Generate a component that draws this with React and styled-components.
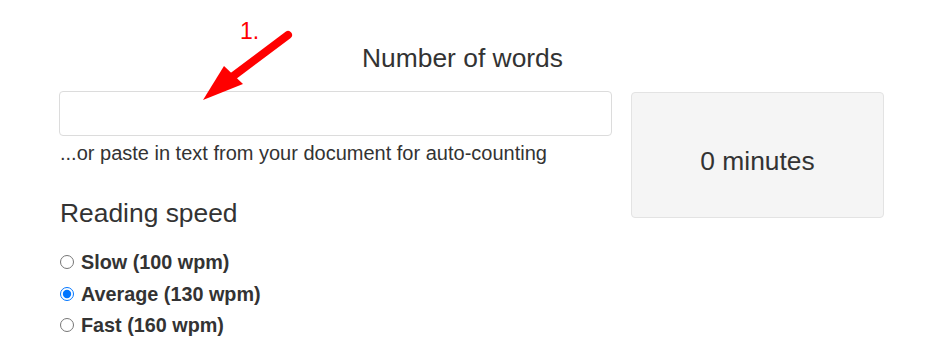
import React from "react";
import styled, { createGlobalStyle } from "styled-components";

const Global = createGlobalStyle`
  html, body { margin: 0; padding: 0; background: #fff; }
  body { font-family: "Liberation Sans", Arial, sans-serif; color: #333; }
`;

const Page = styled.div`
  position: relative;
  width: 938px;
  height: 360px;
  padding: 40px 54px 0 59px;
  box-sizing: border-box;
`;

const Title = styled.h3`
  margin: 0 18px 15px 0;
  font-size: 26.4px;
  font-weight: 400;
  line-height: 36px;
  text-align: center;
`;

const Row = styled.div`
  display: grid;
  grid-template-columns: 553px 253px;
  column-gap: 19px;
  align-items: start;
`;

const Col = styled.div`
  display: flex;
  flex-direction: column;
`;

const TextInput = styled.input`
  box-sizing: border-box;
  width: 100%;
  height: 45px;
  border: 1px solid #dcdcdc;
  border-radius: 4px;
  padding: 6px 12px;
  font: inherit;
  font-size: 19.8px;
  outline: none;
`;

const Help = styled.p`
  margin: 5px 0 0 1px;
  font-size: 20px;
  line-height: 24px;
  color: #333;
`;

const SubTitle = styled.h3`
  margin: 30px 0 18px 1px;
  font-size: 26.4px;
  font-weight: 400;
  line-height: 36px;
`;

const Options = styled.div`
  display: flex;
  flex-direction: column;
  gap: 5.5px;
`;

const Option = styled.label`
  display: flex;
  align-items: center;
  gap: 7px;
  font-size: 19.8px;
  font-weight: 700;
  line-height: 26px;
  cursor: pointer;
`;

const Radio = styled.input`
  margin: 0 0 0 1px;
  width: 14px;
  height: 14px;
  accent-color: #0075ff;
`;

const Result = styled.div`
  box-sizing: border-box;
  margin-top: 1px;
  height: 126px;
  background: #f5f5f5;
  border: 1px solid #e3e3e3;
  border-radius: 4px;
  display: flex;
  align-items: center;
  justify-content: center;
  padding-top: 13px;
  font-size: 26.4px;
`;

const Annotation = styled.svg`
  position: absolute;
  left: 0;
  top: 0;
  pointer-events: none;
`;

const AnnotationLabel = styled.span`
  position: absolute;
  left: 240px;
  top: 19px;
  font-size: 23px;
  line-height: 24px;
  color: #ff0000;
`;

export default function App() {
  const [speed, setSpeed] = React.useState("130");
  const speeds = [
    { v: "100", l: "Slow (100 wpm)" },
    { v: "130", l: "Average (130 wpm)" },
    { v: "160", l: "Fast (160 wpm)" },
  ];
  return (
    <>
      <Global />
      <Page>
        <Title>Number of words</Title>
        <Row>
          <Col>
            <TextInput type="text" />
            <Help>...or paste in text from your document for auto-counting</Help>
            <SubTitle>Reading speed</SubTitle>
            <Options>
              {speeds.map((s) => (
                <Option key={s.v}>
                  <Radio
                    type="radio"
                    name="speed"
                    checked={speed === s.v}
                    onChange={() => setSpeed(s.v)}
                  />
                  {s.l}
                </Option>
              ))}
            </Options>
          </Col>
          <Result>0 minutes</Result>
        </Row>
        <AnnotationLabel>1.</AnnotationLabel>
        <Annotation width="938" height="360" viewBox="0 0 938 360">
          <line x1="288" y1="35" x2="232" y2="77" stroke="#ff0000" strokeWidth="8" strokeLinecap="round" />
          <polygon points="203,100 224,66 243,84" fill="#ff0000" />
        </Annotation>
      </Page>
    </>
  );
}
